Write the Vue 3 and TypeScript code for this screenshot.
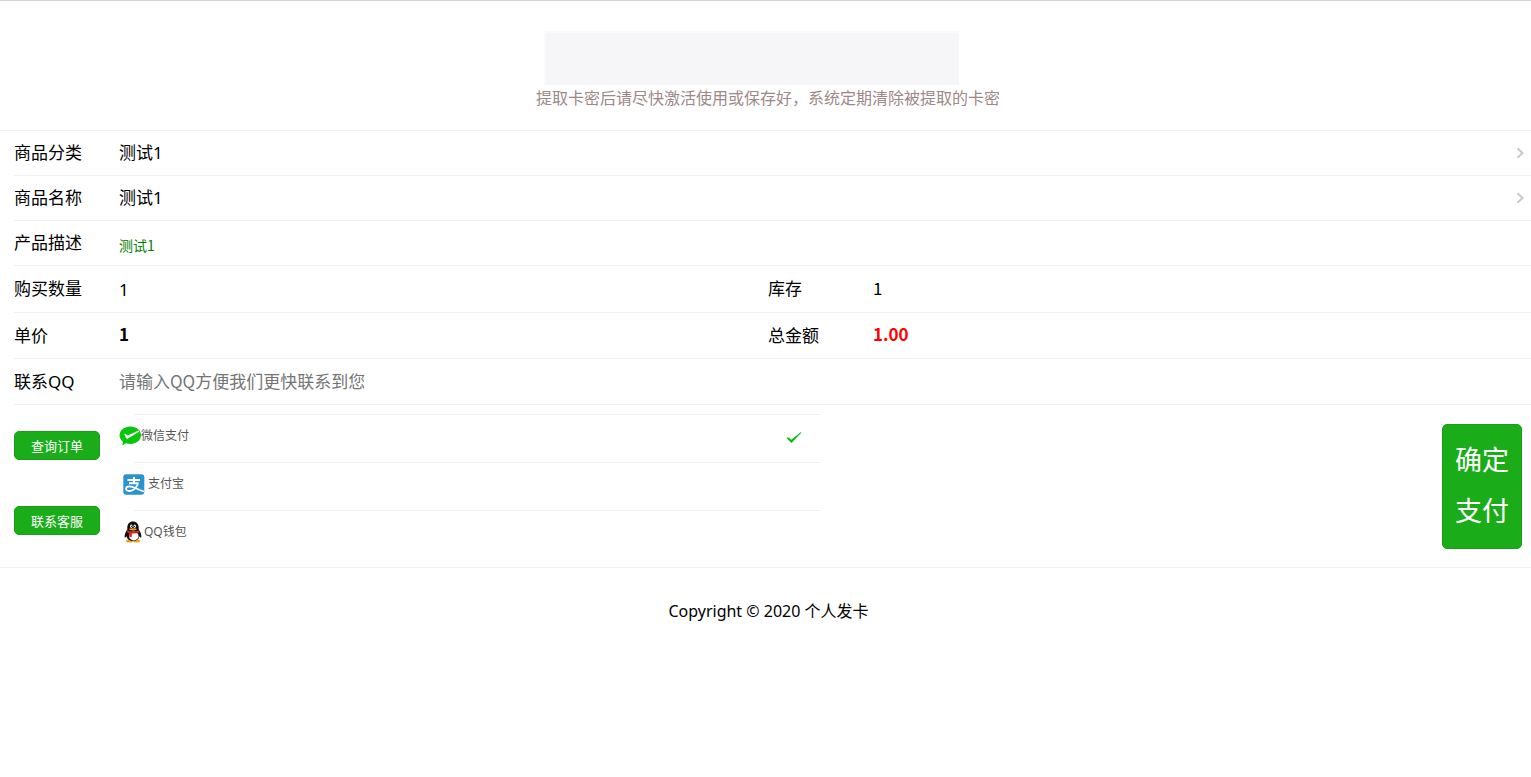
<script setup lang="ts">
import { ref } from 'vue'

type PayKey = 'wechat' | 'alipay' | 'qq'

const payments: { key: PayKey; label: string }[] = [
  { key: 'wechat', label: '微信支付' },
  { key: 'alipay', label: '支付宝' },
  { key: 'qq', label: 'QQ钱包' },
]
const category = ref('测试1')
const product = ref('测试1')
const quantity = ref('1')
const contact = ref('')
const payment = ref<PayKey>('wechat')
</script>

<template>
  <main class="page">
    <header class="header">
      <div class="banner"></div>
      <p class="notice">提取卡密后请尽快激活使用或保存好，系统定期清除被提取的卡密</p>
    </header>

    <form class="form" @submit.prevent>
      <div class="row">
        <label class="label" for="category">商品分类</label>
        <select id="category" v-model="category" class="field">
          <option>测试1</option>
        </select>
        <svg class="chevron" viewBox="0 0 9 12" aria-hidden="true"><path d="M1.500 1.300 6.500 6l-5 4.700" /></svg>
      </div>
      <div class="row">
        <label class="label" for="product">商品名称</label>
        <select id="product" v-model="product" class="field">
          <option>测试1</option>
        </select>
        <svg class="chevron" viewBox="0 0 9 12" aria-hidden="true"><path d="M1.500 1.300 6.500 6l-5 4.700" /></svg>
      </div>
      <div class="row">
        <span class="label">产品描述</span>
        <span class="description">测试1</span>
      </div>
      <div class="row tall quantity">
        <div class="half">
          <label class="label" for="quantity">购买数量</label>
          <input id="quantity" v-model="quantity" class="field" type="text" />
        </div>
        <div class="half">
          <span class="label">库存</span>
          <span class="value">1</span>
        </div>
      </div>
      <div class="row tall">
        <div class="half">
          <span class="label">单价</span>
          <strong class="value">1</strong>
        </div>
        <div class="half">
          <span class="label">总金额</span>
          <strong class="value total">1.00</strong>
        </div>
      </div>
      <div class="row tall">
        <label class="label" for="contact">联系QQ</label>
        <input id="contact" v-model="contact" class="field" type="text" placeholder="请输入QQ方便我们更快联系到您" />
      </div>

      <div class="checkout">
        <div class="links">
          <button type="button" class="small">查询订单</button>
          <button type="button" class="small">联系客服</button>
        </div>
        <div class="pay">
          <div class="methods">
            <label v-for="item in payments" :key="item.key" class="method" :class="item.key">
              <svg v-if="item.key === 'wechat'" class="logo" width="22" height="20" viewBox="0 0 22 20" aria-hidden="true">
                <path fill="#09c50b" d="M11.300.5C17.300.5 22 4.300 22 9.200S17.300 18 11.300 18c-1.500 0-3-.2-4.300-.7L3.300 19.500l.7-3.800C1.800 14.100.6 11.800.6 9.200.6 4.300 5.300.5 11.300.5z" />
                <path fill="#fff" d="M5.200 8.100c.6-.5 1.100-.3 2.900 1.100.5.300.8.300 1.300.1l10.200-4.800.9 1.100L8.900 12.600c-.8.500-1.400.3-1.800-.5z" />
              </svg>
              <svg v-else-if="item.key === 'alipay'" class="logo" width="22" height="21" viewBox="0 0 22 21" aria-hidden="true">
                <rect x=".3" y=".3" width="21" height="20.400" rx="3" fill="#2893cf" />
                <path d="M4.500 6h12.500M11 3v6.300M6 9.300h9.500" fill="none" stroke="#fff" stroke-width="1.900" />
                <path d="M15 9.300c-1 3.700-4.200 7.500-8 7.700-2 .1-4-.7-4-2.300 0-1.500 1.800-2.400 3.600-2.400 3.900 0 6.700 2.900 14.600 5.200" fill="none" stroke="#fff" stroke-width="1.800" />
              </svg>
              <svg v-else class="logo" width="18" height="22" viewBox="0 0 18 22" aria-hidden="true">
                <ellipse cx="5.500" cy="19.900" rx="3.500" ry="1.700" fill="#f0a51b" />
                <ellipse cx="12.500" cy="19.900" rx="3.500" ry="1.700" fill="#f0a51b" />
                <path fill="#101010" d="M9 .5c3.400 0 5.700 2.500 5.700 6.100v1.900c1.700 2.200 2.900 5.200 2.700 7.600-.4 1.100-1.300.3-2-.9-.7 3.300-3 4.700-6.400 4.700s-5.700-1.400-6.400-4.700c-.7 1.200-1.600 2-2 .9-.2-2.400 1-5.400 2.700-7.600V6.600C3.300 3 5.600.5 9 .5z" />
                <ellipse cx="9.800" cy="15" rx="4.800" ry="4.400" fill="#fff" />
                <ellipse cx="7.300" cy="5.200" rx="1.200" ry="1.800" fill="#fff" />
                <ellipse cx="10.700" cy="5.200" rx="1.200" ry="1.800" fill="#fff" />
                <circle cx="7.600" cy="5.400" r=".6" fill="#111" />
                <circle cx="10.400" cy="5.400" r=".6" fill="#111" />
                <ellipse cx="9" cy="8.300" rx="3.700" ry="1.100" fill="#f3a51d" />
                <path fill="#e3201b" d="M3.200 9.400c3.800 1.500 7.900 1.500 11.700 0l.4 1.800c-2.500 1.100-5 1.500-7.500 1.400v3.400l-2.600-.2.200-3.600-2.600-1.100z" />
              </svg>
              <span class="name">{{ item.label }}</span>
              <input v-model="payment" type="radio" name="payment" class="radio" :value="item.key" />
              <svg v-if="payment === item.key" class="tick" width="16" height="14" viewBox="0 0 16 14" aria-hidden="true">
                <path fill="#09bb07" d="M.5 8.900 2 8.300l3.300 2.500 9.400-7.600.8.200L5.500 14z" />
              </svg>
            </label>
          </div>
          <button type="submit" class="confirm">确定<br />支付</button>
        </div>
      </div>
    </form>

    <footer class="footer">Copyright © 2020 个人发卡</footer>
  </main>
</template>

<style>
body {
  background: #fff;
}
</style>

<style scoped>
.page {
  border-top: 1px solid #d3d3d3;
  color: #000;
  font: 17px/24px "Noto Sans", "Noto Sans CJK SC", sans-serif;
}
.header {
  display: flex;
  flex-direction: column;
  align-items: center;
  padding: 30px 0 19px;
}
.banner {
  box-sizing: border-box;
  width: 415px;
  height: 54px;
  margin-right: 28px;
  background: #f6f6f9;
  border-top: 2px solid #fafafb;
  border-left: 2px solid #fafafb;
}
.notice {
  margin: 0;
  padding-left: 5px;
  color: #9d8888;
  font-size: 16px;
  line-height: 26px;
}
.form {
  border-top: 1px solid #f0f0f0;
  border-bottom: 1px solid #f0f0f0;
}
.row {
  display: flex;
  align-items: center;
  min-height: 44px;
  margin-left: 14px;
  padding-right: 6px;
  border-bottom: 1px solid #f0f0f0;
}
.row.tall {
  min-height: 45px;
  padding-right: 9px;
}
.row.quantity {
  min-height: 46px;
}
.half {
  display: flex;
  flex: 1;
  align-items: center;
  min-width: 0;
}
.label {
  flex: 0 0 105px;
}
.field {
  flex: 1;
  min-width: 0;
  height: 44px;
  margin: 0;
  padding: 0;
  border: 0;
  outline: 0;
  appearance: none;
  background: transparent;
  color: #000;
  font: inherit;
}
.field::placeholder {
  color: #757575;
  font-family: "Noto Sans CJK SC", sans-serif;
  opacity: 1;
}
.chevron {
  width: 9px;
  height: 12px;
  fill: none;
  stroke: #c8c8cd;
  stroke-width: 2;
}
.description {
  padding-top: 4px;
  color: #008000;
  font-family: "Noto Sans CJK SC", sans-serif;
  font-size: 14px;
}
.value {
  padding-bottom: 3px;
  font-family: "Noto Sans CJK SC", sans-serif;
  font-size: 17px;
}
.total {
  color: #f00;
}
.checkout {
  display: flex;
  padding: 9px 9px 9px 14px;
}
.links {
  display: flex;
  flex: 0 0 105px;
  flex-direction: column;
  align-items: flex-start;
  gap: 46px;
  padding-top: 17px;
}
button {
  margin: 0;
  border: 1px solid #1a9f1a;
  border-radius: 5px;
  background: #1aad19;
  color: #fff;
  font-family: "Noto Sans", "Noto Sans CJK SC", sans-serif;
}
.small {
  width: 86px;
  height: 29px;
  padding: 0;
  font-size: 13px;
}
.pay {
  display: grid;
  flex: 1;
  grid-template-columns: 1fr 1fr;
  align-items: start;
}
.method {
  box-sizing: border-box;
  position: relative;
  display: flex;
  align-items: center;
  height: 48px;
  padding: 0 19px 4px 0;
}
.method::before {
  position: absolute;
  top: 0;
  right: 0;
  left: 15px;
  border-top: 1px solid #f0f0f0;
  content: "";
}
.method.alipay {
  gap: 3px;
  padding-left: 4px;
}
.method.qq {
  gap: 2px;
  padding-left: 5px;
}
.logo {
  flex: none;
}
.name {
  flex: 1;
  color: #555;
  font-size: 12px;
  line-height: 20px;
}
.radio {
  position: absolute;
  right: 19px;
  margin: 0;
  opacity: 0;
}
.confirm {
  justify-self: end;
  width: 80px;
  height: 125px;
  margin-top: 10px;
  padding: 0 0 4px;
  font-size: 27px;
  line-height: 51px;
}
.footer {
  padding: 30px 0 30px 6px;
  font-size: 16px;
  line-height: 26px;
  text-align: center;
}
</style>
